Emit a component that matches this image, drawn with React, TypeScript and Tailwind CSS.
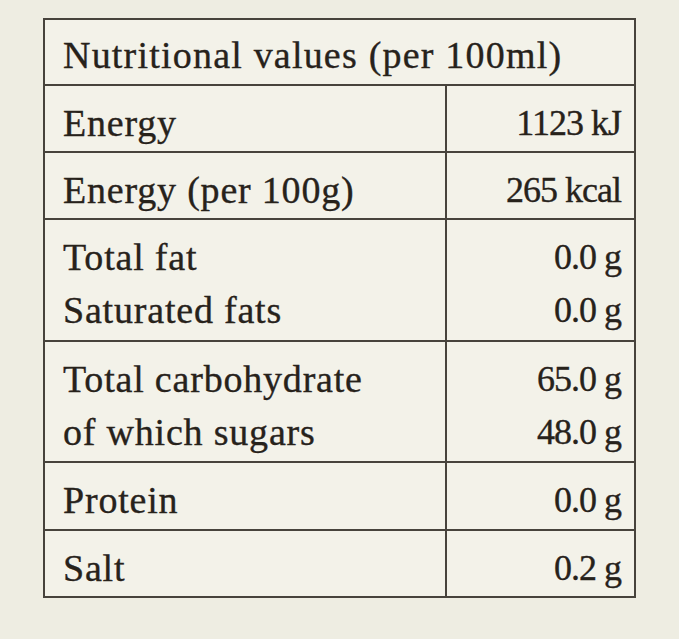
import React from "react";

type Row = { labels: string[]; values: string[]; pb: string };

const rows: Row[] = [
  { labels: ["Energy"], values: ["1123 kJ"], pb: "pb-[1px]" },
  { labels: ["Energy (per 100g)"], values: ["265 kcal"], pb: "pb-[1px]" },
  { labels: ["Total fat", "Saturated fats"], values: ["0.0 g", "0.0 g"], pb: "pb-[3px]" },
  { labels: ["Total carbohydrate", "of which sugars"], values: ["65.0 g", "48.0 g"], pb: "pb-[2px]" },
  { labels: ["Protein"], values: ["0.0 g"], pb: "pb-[2px]" },
  { labels: ["Salt"], values: ["0.2 g"], pb: "pb-[1px]" },
];

export default function App() {
  return (
    <div
      className="w-[679px] h-[639px] bg-[#eeede2] pt-[18px] pl-[43px] text-[#27221b] [-webkit-text-stroke:0.35px_#27221b]"
      style={{ fontFamily: '"Liberation Serif", "DejaVu Serif", serif' }}
    >
      <table className="w-[593px] border-collapse bg-[#f3f2e9]">
        <thead>
          <tr>
            <th
              colSpan={2}
              className="border-2 border-[#47433c] pl-[18px] pt-[9px] pb-[2px] align-top text-left font-normal text-[38px] tracking-[1.2px] leading-[53px]"
            >
              Nutritional values (per 100ml)
            </th>
          </tr>
        </thead>
        <tbody>
          {rows.map((row) => (
            <tr key={row.labels[0]}>
              <td className={`w-[402px] border-2 border-[#47433c] pl-[18px] pt-[11px] ${row.pb} align-top text-[38px] tracking-[0.8px] leading-[53px]`}>
                {row.labels.map((l) => (
                  <div key={l}>{l}</div>
                ))}
              </td>
              <td className={`border-2 border-[#47433c] pr-[13px] pt-[11px] ${row.pb} align-top text-right text-[36px] tracking-[-1px] leading-[53px]`}>
                {row.values.map((v, i) => (
                  <div key={i}>{v}</div>
                ))}
              </td>
            </tr>
          ))}
        </tbody>
      </table>
    </div>
  );
}
